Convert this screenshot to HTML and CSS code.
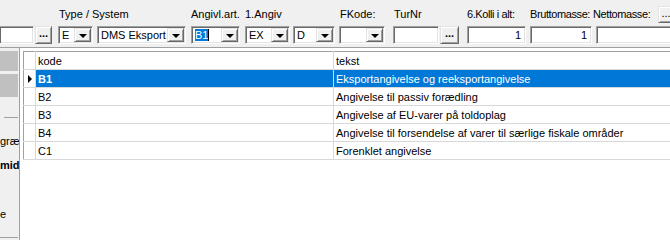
FILE: index.html
```html
<!DOCTYPE html>
<html lang="da">
<head>
    <meta charset="UTF-8">
    <title>Angivelse</title>
    <link rel="stylesheet" href="styles.css">
</head>
<body>
<div class="toolbar">
    <div class="labels">
        <span class="lbl lbl-type">Type / System</span>
        <span class="lbl lbl-art">Angivl.art.</span>
        <span class="lbl lbl-angiv">1.Angiv</span>
        <span class="lbl lbl-fkode">FKode:</span>
        <span class="lbl lbl-turnr">TurNr</span>
        <span class="lbl narrow lbl-kolli">6.Kolli i alt:</span>
        <span class="lbl narrow lbl-brutto">Bruttomasse:</span>
        <span class="lbl narrow lbl-netto">Nettomasse:</span>
        <button class="dots dots-top">...</button>
    </div>
    <div class="fields">
        <div class="edit f-left"></div>
        <button class="dots f-btn1">...</button>
        <div class="combo f-e"><span class="val">E</span><span class="drop"></span></div>
        <div class="combo f-dms"><span class="val">DMS Eksport</span><span class="drop"></span></div>
        <div class="combo f-b1"><span class="val"><span class="sel">B1</span><span class="caret"></span></span><span class="drop"></span></div>
        <div class="combo f-ex"><span class="val">EX</span><span class="drop"></span></div>
        <div class="combo f-d"><span class="val">D</span><span class="drop"></span></div>
        <div class="combo f-fk"><span class="val"></span><span class="drop"></span></div>
        <div class="edit f-tur"></div>
        <button class="dots f-btn2">...</button>
        <div class="edit num f-kolli">1</div>
        <div class="edit num f-brutto">1</div>
        <div class="edit f-netto"></div>
    </div>
</div>

<div class="main">
    <div class="side">
        <div class="side-tab tab1"></div>
        <div class="side-tab tab2"></div>
        <div class="side-rule"></div>
        <div class="side-txt t-gr">græ</div>
        <div class="side-txt t-mid">mid</div>
        <div class="side-txt t-e">e</div>
        <div class="side-bottom"></div>
    </div>

    <div class="popup">
        <table class="grid">
            <tr class="head">
                <td class="ind"></td>
                <td class="c-kode">kode</td>
                <td class="c-tekst">tekst</td>
            </tr>
            <tr class="current">
                <td class="ind"><span class="arrow"></span></td>
                <td>B1</td>
                <td>Eksportangivelse og reeksportangivelse</td>
            </tr>
            <tr>
                <td class="ind"></td>
                <td>B2</td>
                <td>Angivelse til passiv forædling</td>
            </tr>
            <tr>
                <td class="ind"></td>
                <td>B3</td>
                <td>Angivelse af EU-varer på toldoplag</td>
            </tr>
            <tr>
                <td class="ind"></td>
                <td>B4</td>
                <td>Angivelse til forsendelse af varer til særlige fiskale områder</td>
            </tr>
            <tr>
                <td class="ind"></td>
                <td>C1</td>
                <td>Forenklet angivelse</td>
            </tr>
        </table>
    </div>
</div>
</body>
</html>
```

FILE: styles.css
```css
* {
    box-sizing: border-box;
}
html, body {
    margin: 0;
    width: 670px;
    height: 240px;
    overflow: hidden;
}
body {
    font-family: "Liberation Sans", Arial, sans-serif;
    font-size: 11px;
    color: #000;
    background: #f0f0f0;
}

/* toolbar */
.toolbar {
    height: 48px;
    border-bottom: 1px solid #a0a0a0;
    background: #f0f0f0;
}
.labels {
    display: flex;
    align-items: center;
    height: 26px;
    padding-left: 59px;
    white-space: nowrap;
}
.lbl {
    display: block;
    flex-shrink: 0;
    line-height: 13px;
    padding-top: 2px;
}
.narrow {
    letter-spacing: -0.4px;
}
.lbl-type { width: 132px; }
.lbl-art { width: 54px; }
.lbl-angiv { width: 95px; }
.lbl-fkode { width: 54px; }
.lbl-turnr { width: 73px; }
.lbl-kolli { width: 63px; }
.lbl-brutto { width: 63px; }
.lbl-netto { width: 65px; }

.fields {
    display: flex;
    height: 18px;
    white-space: nowrap;
}

.edit, .combo {
    height: 18px;
    background: #fff;
    border: 1px solid;
    border-color: #a0a0a0 #fff #fff #a0a0a0;
    box-shadow: inset 1px 1px #696969, inset -1px -1px #e3e3e3;
    flex-shrink: 0;
}
.edit {
    padding: 2px 4px;
    line-height: 12px;
}
.num {
    text-align: right;
}
.combo {
    display: flex;
    padding: 1px;
}
.combo .val {
    flex: 1;
    padding: 1px 2px;
    line-height: 13px;
    overflow: hidden;
}
.combo .drop {
    width: 17px;
    height: 14px;
    background: #f0f0f0;
    border: 1px solid;
    border-color: #e3e3e3 #696969 #696969 #e3e3e3;
    box-shadow: inset 1px 1px #fff, inset -1px -1px #a0a0a0;
    display: flex;
    align-items: center;
    justify-content: center;
}
.combo .drop::after {
    content: "";
    border-left: 4px solid transparent;
    border-right: 4px solid transparent;
    border-top: 4px solid #000;
    margin-top: 1px;
}
.sel {
    background: #0078d7;
    color: #fff;
}
.caret {
    display: inline-block;
    width: 1px;
    height: 12px;
    background: #000;
    vertical-align: -2px;
}

.dots {
    font: bold 11px "Liberation Sans", Arial, sans-serif;
    height: 18px;
    padding: 2px 0 0;
    display: flex;
    align-items: flex-start;
    justify-content: center;
    background: #f0f0f0;
    border: 1px solid;
    border-color: #e3e3e3 #696969 #696969 #e3e3e3;
    box-shadow: inset 1px 1px #fff, inset -1px -1px #a0a0a0;
    color: #000;
    line-height: 8px;
    flex-shrink: 0;
}
.dots-top {
    width: 16px;
    height: 17px;
    margin-top: 2px;
    font-weight: normal;
}

.f-left { width: 34px; border-left: none; }
.f-btn1 { width: 17px; margin-left: 1px; }
.f-e { width: 35px; margin-left: 6px; }
.f-dms { width: 89px; margin-left: 4px; }
.f-b1 { width: 49px; margin-left: 5px; }
.f-ex { width: 45px; margin-left: 5px; }
.f-d { width: 42px; margin-left: 3px; }
.f-fk { width: 46px; margin-left: 4px; }
.f-tur { width: 46px; margin-left: 8px; }
.f-btn2 { width: 19px; margin-left: 1px; }
.f-kolli { width: 59px; margin-left: 8px; }
.f-brutto { width: 62px; margin-left: 4px; }
.f-netto { width: 80px; margin-left: 4px; }

/* lower area */
.main {
    display: flex;
    height: 192px;
}
.side {
    width: 20px;
    border-right: 1px solid #a0a0a0;
    display: flex;
    flex-direction: column;
    overflow: hidden;
}
.side-tab {
    width: 18px;
    background: #c0c0c0;
}
.tab1 {
    margin-top: 3px;
    height: 20px;
}
.tab2 {
    margin-top: 3px;
    height: 23px;
}
.side-rule {
    margin: 20px 0 0 4px;
    width: 14px;
    height: 1px;
    background: #a0a0a0;
}
.side-txt {
    line-height: 13px;
    white-space: nowrap;
}
.t-gr {
    margin-top: 17px;
    text-align: right;
}
.t-mid {
    margin-top: 11px;
    font-weight: bold;
    text-align: right;
}
.t-e {
    margin-top: 36px;
}
.side-bottom {
    margin-top: auto;
    margin-bottom: 2px;
    width: 18px;
    height: 1px;
    background: #a0a0a0;
}

.popup {
    flex: 1;
    background: #fff;
    padding: 3px 0 0 3px;
    overflow: hidden;
}
.grid {
    border-collapse: collapse;
    width: 660px;
    table-layout: fixed;
    border-top: 1px solid #a0a0a0;
    border-left: 1px solid #a0a0a0;
}
.grid td {
    height: 18px;
    padding: 1px 2px 0;
    border-bottom: 1px solid #d8d8d8;
    border-right: 1px solid #d8d8d8;
    white-space: nowrap;
    overflow: hidden;
    line-height: 16px;
}
.grid td.ind {
    width: 12px;
    padding: 0;
}
.grid .c-kode {
    width: 298px;
}
.current td:not(.ind) {
    background: #0078d7;
    color: #fff;
}
.current td:nth-child(2) {
    font-weight: bold;
}
.arrow {
    display: block;
    margin-left: 4px;
    border-top: 4px solid transparent;
    border-bottom: 4px solid transparent;
    border-left: 4px solid #000;
    width: 0;
}
```
